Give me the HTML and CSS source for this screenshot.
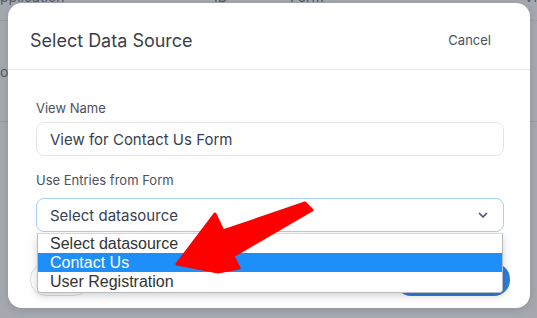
FILE: index.html
```html
<!DOCTYPE html>
<html lang="en">
<head>
  <meta charset="UTF-8">
  <meta name="viewport" content="width=device-width, initial-scale=1.0">
  <title>Select Data Source</title>
  <link rel="stylesheet" href="styles.css">
</head>
<body>
  <!-- page behind the overlay -->
  <div class="backdrop">
    <div class="bg-row bg-head">
      <span class="bg-cell c1">pplication</span>
      <span class="bg-cell c2">ID</span>
      <span class="bg-cell c3">Form</span>
      <span class="bg-cell c4">Vi</span>
    </div>
    <div class="bg-row tall">
      <span class="bg-cell c1">o</span>
      <span class="bg-cell c4">i</span>
    </div>
  </div>

  <div class="modal">
    <div class="modal-header">
      <h2 class="modal-title">Select Data Source</h2>
      <button type="button" class="link-btn">Cancel</button>
    </div>

    <div class="modal-body">
      <label class="field-label" for="view-name">View Name</label>
      <div class="text-input" id="view-name">View for Contact Us Form</div>

      <label class="field-label second" for="source">Use Entries from Form</label>
      <div class="select-wrap">
        <div class="select-box" id="source">
          <span>Select datasource</span>
          <svg class="chevron" width="10" height="7" viewBox="0 0 10 7">
            <path d="M1.5 1.5 L5 5 L8.5 1.5" fill="none" stroke="#4b5563" stroke-width="1.7" stroke-linecap="round" stroke-linejoin="round"/>
          </svg>
        </div>
        <ul class="options">
          <li>Select datasource</li>
          <li class="active">Contact Us</li>
          <li>User Registration</li>
        </ul>
      </div>
    </div>

    <!-- footer buttons sit under the open list; only their edges show -->
    <div class="modal-footer">
      <button type="button" class="btn btn-outline" aria-label="Back"></button>
      <button type="button" class="btn btn-primary" aria-label="Continue"></button>
    </div>
  </div>

  <!-- annotation arrow -->
  <svg class="annotation" width="537" height="318" viewBox="0 0 537 318">
    <polygon points="177,264 215,214 223,231 305,203 312,210 233,256 239,268 218,272"
             fill="#ff0000" stroke="#ff0000" stroke-width="3" stroke-linejoin="round"/>
  </svg>
</body>
</html>
```

FILE: styles.css
```css
body {
  margin: 0;
  width: 537px;
  height: 318px;
  overflow: hidden;
  position: relative;
  background: #a5a8af;
  font-family: Inter, "Noto Sans", sans-serif;
  color: #374151;
}
.backdrop {
  margin-top: -28px;
}
.bg-row {
  display: flex;
  height: 48px;
  align-items: center;
  border-bottom: 1px solid #989ba3;
  font-size: 14px;
  color: #555963;
}
.bg-row.tall {
  height: 100px;
}
.bg-cell.c1 { width: 214px; }
.bg-cell.c2 { width: 76px; }
.bg-cell.c3 { width: 234px; }
.bg-cell.c4 { flex: 1; }

.modal {
  position: absolute;
  left: 8px;
  top: 3px;
  width: 522px;
  height: 305px;
  background: #fff;
  border-radius: 14px;
  box-shadow: 0 2px 10px rgba(0, 0, 0, 0.12);
  overflow: hidden;
}
.modal-header {
  height: 58px;
  padding: 8px 39px 0 22px;
  display: flex;
  align-items: center;
  justify-content: space-between;
  border-bottom: 1px solid #e6e8ec;
}
.modal-title {
  margin: 0;
  font-size: 18px;
  font-weight: 400;
  color: #3a3f4b;
}
.link-btn {
  border: none;
  background: none;
  padding: 0;
  font-family: inherit;
  font-size: 13px;
  color: #4b5160;
}
.modal-body {
  padding: 30px 26px 0 28px;
}
.field-label {
  display: block;
  font-size: 13px;
  line-height: 16px;
  color: #4b5160;
  margin-bottom: 6px;
}
.field-label.second {
  margin-top: 16px;
  margin-bottom: 10px;
}
.text-input,
.select-box {
  height: 34px;
  box-sizing: border-box;
  border: 1px solid #e3e5e9;
  border-radius: 8px;
  padding: 0 13px;
  display: flex;
  align-items: center;
  font-size: 15px;
  color: #374151;
}
.select-wrap {
  position: relative;
}
.select-box {
  border-color: #a9cffa;
  justify-content: space-between;
  padding-right: 15px;
}
.chevron {
  display: block;
}
.options {
  position: absolute;
  left: 1px;
  right: 1px;
  top: 35px;
  margin: 0;
  padding: 0 0 1px;
  list-style: none;
  background: #fff;
  border: 1px solid #b9bcc3;
  border-top-color: #d5d7db;
  border-radius: 0 0 4px 4px;
  box-shadow: 0 3px 8px rgba(0, 0, 0, 0.18);
  font-family: "Liberation Sans", Arial, sans-serif;
  font-size: 16px;
  color: #333;
  z-index: 2;
}
.options li {
  height: 19px;
  line-height: 19px;
  padding-left: 12px;
}
.options li.active {
  background: #1e8ef8;
  color: #fff;
}
.modal-footer {
  display: flex;
  justify-content: space-between;
  padding: 31px 20px 0 22px;
}
.btn {
  height: 33px;
  border-radius: 16px;
  padding: 0;
}
.btn-outline {
  width: 60px;
  background: #fff;
  border: 1px solid #dcdee3;
}
.btn-primary {
  width: 115px;
  background: #2f7fdc;
  border: none;
}
.annotation {
  position: absolute;
  left: 0;
  top: 0;
  z-index: 5;
}
```
